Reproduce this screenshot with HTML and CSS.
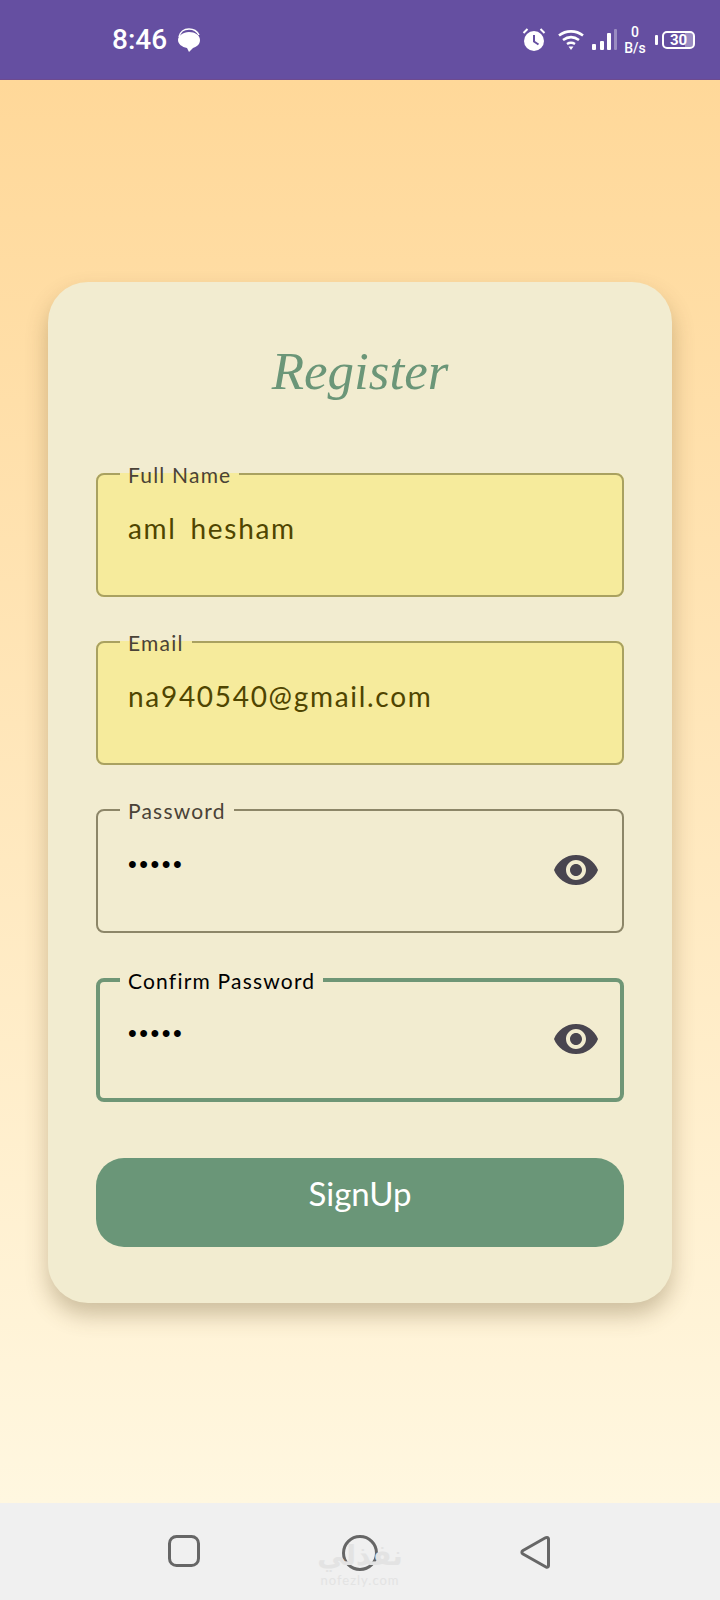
FILE: index.html
```html
<!DOCTYPE html>
<html lang="en">
<head>
  <meta charset="UTF-8" />
  <meta name="viewport" content="width=device-width, initial-scale=1.0"/>
  <title>Register</title>
  <link rel="stylesheet" href="styles.css">
</head>
<body>
  <div class="status-bar">
    <div class="status-left">
      <span class="clock">8:46</span>
      <svg class="icon-chat" width="25" height="24" viewBox="0 0 25 24">
        <path d="M3 9C4 4 8 1 13 1s8 2 10 6" fill="none" stroke="#fff" stroke-width="1.5"/>
        <path d="M13 4c6 0 11 3 11 8s-4 7-7 8l-4 4-2-4C6 19 2 16 2 12s5-8 11-8z" fill="#fff"/>
      </svg>
    </div>
    <div class="status-right">
      <svg width="24" height="23" viewBox="0 0 24 23">
        <circle cx="12" cy="13" r="10" fill="#fff"/>
        <path d="M12 7v6.500l4.500 3" fill="none" stroke="#654fa1" stroke-width="2"/>
        <path d="M1.500 5L5.500 1M22.500 5l-4-4" fill="none" stroke="#fff" stroke-width="2"/>
      </svg>
      <svg class="icon-wifi" width="26" height="21" viewBox="0 0 26 21">
        <path d="M1 6.500C8 1 18 1 25 6.500" fill="none" stroke="#fff" stroke-width="2.600"/>
        <path d="M5 11c5-3.600 11-3.600 16 0" fill="none" stroke="#fff" stroke-width="2.600"/>
        <path d="M9 15c2.600-1.600 5.400-1.600 8 0" fill="none" stroke="#fff" stroke-width="2.600"/>
        <path d="M10.500 17.500h5L13 21z" fill="#fff"/>
      </svg>
      <svg class="icon-signal" width="25" height="21" viewBox="0 0 25 21">
        <rect x="0" y="15" width="4" height="6" rx="1" fill="#fff"/>
        <rect x="8" y="12" width="4" height="9" rx="1" fill="#fff"/>
        <rect x="15" y="4" width="4" height="17" rx="1" fill="#fff"/>
        <rect x="22" y="0" width="3" height="21" rx="1" fill="#fff" opacity="0.35"/>
      </svg>
      <div class="net-speed"><span>0</span><span>B/s</span></div>
      <div class="battery-nub"></div>
      <div class="battery"><span class="battery-level"></span><span class="battery-text">30</span></div>
    </div>
  </div>

  <main class="page">
    <div class="card">
      <h1>Register</h1>
      <form class="form">
        <fieldset class="field filled">
          <legend>Full Name</legend>
          <div class="field-row"><span class="value">aml hesham</span></div>
        </fieldset>
        <fieldset class="field filled">
          <legend>Email</legend>
          <div class="field-row"><span class="value">na940540@gmail.com</span></div>
        </fieldset>
        <fieldset class="field">
          <legend>Password</legend>
          <div class="field-row">
            <span class="dots">•••••</span>
            <svg class="eye" width="44" height="30" viewBox="1 4.500 22 15"><path d="M12 4.500C7 4.500 2.730 7.610 1 12c1.730 4.390 6 7.500 11 7.500s9.270-3.110 11-7.500c-1.730-4.390-6-7.500-11-7.500zM12 17c-2.760 0-5-2.240-5-5s2.240-5 5-5 5 2.240 5 5-2.240 5-5 5zm0-8c-1.660 0-3 1.340-3 3s1.340 3 3 3 3-1.340 3-3-1.340-3-3-3z"/></svg>
          </div>
        </fieldset>
        <fieldset class="field focused">
          <legend>Confirm Password</legend>
          <div class="field-row">
            <span class="dots">•••••</span>
            <svg class="eye" width="44" height="30" viewBox="1 4.500 22 15"><path d="M12 4.500C7 4.500 2.730 7.610 1 12c1.730 4.390 6 7.500 11 7.500s9.270-3.110 11-7.500c-1.730-4.390-6-7.500-11-7.500zM12 17c-2.760 0-5-2.240-5-5s2.240-5 5-5 5 2.240 5 5-2.240 5-5 5zm0-8c-1.660 0-3 1.340-3 3s1.340 3 3 3 3-1.340 3-3-1.340-3-3-3z"/></svg>
          </div>
        </fieldset>
        <button class="submit" type="button">SignUp</button>
      </form>
    </div>
  </main>

  <div class="nav-bar">
    <svg width="32" height="32" viewBox="0 0 32 32"><rect x="1.500" y="1.500" width="29" height="29" rx="7" fill="none" stroke="#666" stroke-width="3"/></svg>
    <svg width="36" height="36" viewBox="0 0 36 36"><circle cx="18" cy="18" r="16.500" fill="none" stroke="#666" stroke-width="3"/></svg>
    <svg width="31" height="35" viewBox="0 0 31 35"><path d="M27 2.500c1 0 1.500.7 1.500 2v26c0 1.500-1 2.300-2.500 1.500L3 19c-1.500-1-1.500-2.500 0-3.500L25 3c.7-.4 1.400-.5 2-.5z" fill="none" stroke="#666" stroke-width="3" stroke-linejoin="round"/></svg>
    <div class="watermark">
      <span class="watermark-ar">نفذلي</span>
      <span class="watermark-en">nofezly.com</span>
    </div>
  </div>
</body>
</html>
```

FILE: styles.css
```css
* {
  box-sizing: border-box;
}
body {
  margin: 0;
  width: 720px;
  height: 1600px;
  display: flex;
  flex-direction: column;
  font-family: 'Lato', sans-serif;
  background-color: #fff8e1;
}

/* Status bar */
.status-bar {
  height: 80px;
  background-color: #654fa1;
  border-bottom: 1px solid #6d4a8f;
  color: white;
  font-family: 'Roboto', sans-serif;
  display: flex;
  align-items: center;
  justify-content: space-between;
  padding: 0 25px 0 112px;
}
.status-left {
  display: flex;
  align-items: center;
  gap: 9px;
}
.clock {
  font-size: 28px;
  font-weight: 500;
  line-height: 32px;
}
.status-right {
  display: flex;
  align-items: center;
}
.icon-wifi {
  margin-left: 12px;
}
.icon-signal {
  margin-left: 8px;
}
.net-speed {
  width: 24px;
  margin-left: 6px;
  display: flex;
  flex-direction: column;
  align-items: center;
  font-size: 14px;
  font-weight: 500;
  line-height: 16px;
}
.battery-nub {
  width: 3px;
  height: 10px;
  margin-left: 8px;
  background-color: white;
  border-radius: 1px;
}
.battery {
  position: relative;
  width: 33px;
  height: 18px;
  margin-left: 4px;
  border: 2px solid white;
  border-radius: 5px;
  font-size: 15px;
  font-weight: 700;
  line-height: 14px;
  text-align: center;
}
.battery-level {
  position: absolute;
  top: 0;
  right: 0;
  bottom: 0;
  width: 8px;
  background-color: rgba(255,255,255,0.35);
  border-radius: 0 2px 2px 0;
}
.battery-text {
  position: relative;
}

/* Page */
.page {
  flex: 1;
  padding-top: 2px;
  background: linear-gradient(#ffd899, #fff7e0);
  display: flex;
  align-items: center;
  justify-content: center;
}
.card {
  width: 624px;
  height: 1021px;
  padding: 61px 48px 56px;
  background-color: #f2ecd0;
  border-radius: 40px;
  box-shadow: 0 12px 22px rgba(90,70,30,0.3);
}
h1 {
  margin: 0 0 61px;
  height: 60px;
  text-align: center;
  font-family: 'Liberation Serif', serif;
  font-style: italic;
  font-weight: normal;
  font-size: 53px;
  line-height: 56px;
  color: #6b9678;
}
.form {
  display: flex;
  flex-direction: column;
  gap: 35px;
}
.field {
  margin: 0;
  padding: 0 24px 0 30px;
  min-width: 0;
  border: 2px solid #8d8668;
  border-radius: 8px;
  color: #4a4237;
}
.field legend {
  margin-left: -8px;
  padding: 2px 8px 0;
  font-size: 21px;
  line-height: 18px;
  letter-spacing: 1.2px;
}
.field.filled {
  background-color: #f6eb9c;
  border-color: #a9a160;
}
.field.focused {
  margin-top: 2px;
  border: 4px solid #6f9676;
  color: black;
  padding: 0 22px 0 28px;
}
.field-row {
  height: 111px;
  padding-top: 24px;
  display: flex;
  align-items: flex-start;
  justify-content: space-between;
}
.field.focused .field-row {
  height: 108px;
  padding-top: 23px;
}
.value {
  font-size: 28px;
  line-height: 40px;
  letter-spacing: 1.7px;
  word-spacing: 5px;
  color: #4f4500;
}
.dots {
  font-family: 'Liberation Sans', sans-serif;
  font-size: 25px;
  line-height: 40px;
  letter-spacing: 2.500px;
  color: black;
}
.eye {
  margin-top: 11px;
  fill: #49454f;
}
.submit {
  height: 89px;
  margin-top: 21px;
  padding: 0 0 20px;
  border: none;
  border-radius: 28px;
  background-color: #6a9678;
  color: white;
  font-family: 'Lato', sans-serif;
  font-size: 33px;
}

/* Navigation bar */
.nav-bar {
  position: relative;
  height: 97px;
  background-color: #f0f0f0;
  display: flex;
  align-items: flex-start;
  padding: 32px 0 0 168px;
  gap: 142px;
}
.watermark {
  position: absolute;
  top: 36px;
  left: 310px;
  width: 100px;
  display: flex;
  flex-direction: column;
  align-items: center;
  color: #e3e3e3;
}
.watermark-ar {
  font-family: 'DejaVu Sans', sans-serif;
  font-size: 28px;
  font-weight: bold;
  line-height: 34px;
}
.watermark-en {
  font-size: 13px;
  line-height: 14px;
  letter-spacing: 1px;
}
```
